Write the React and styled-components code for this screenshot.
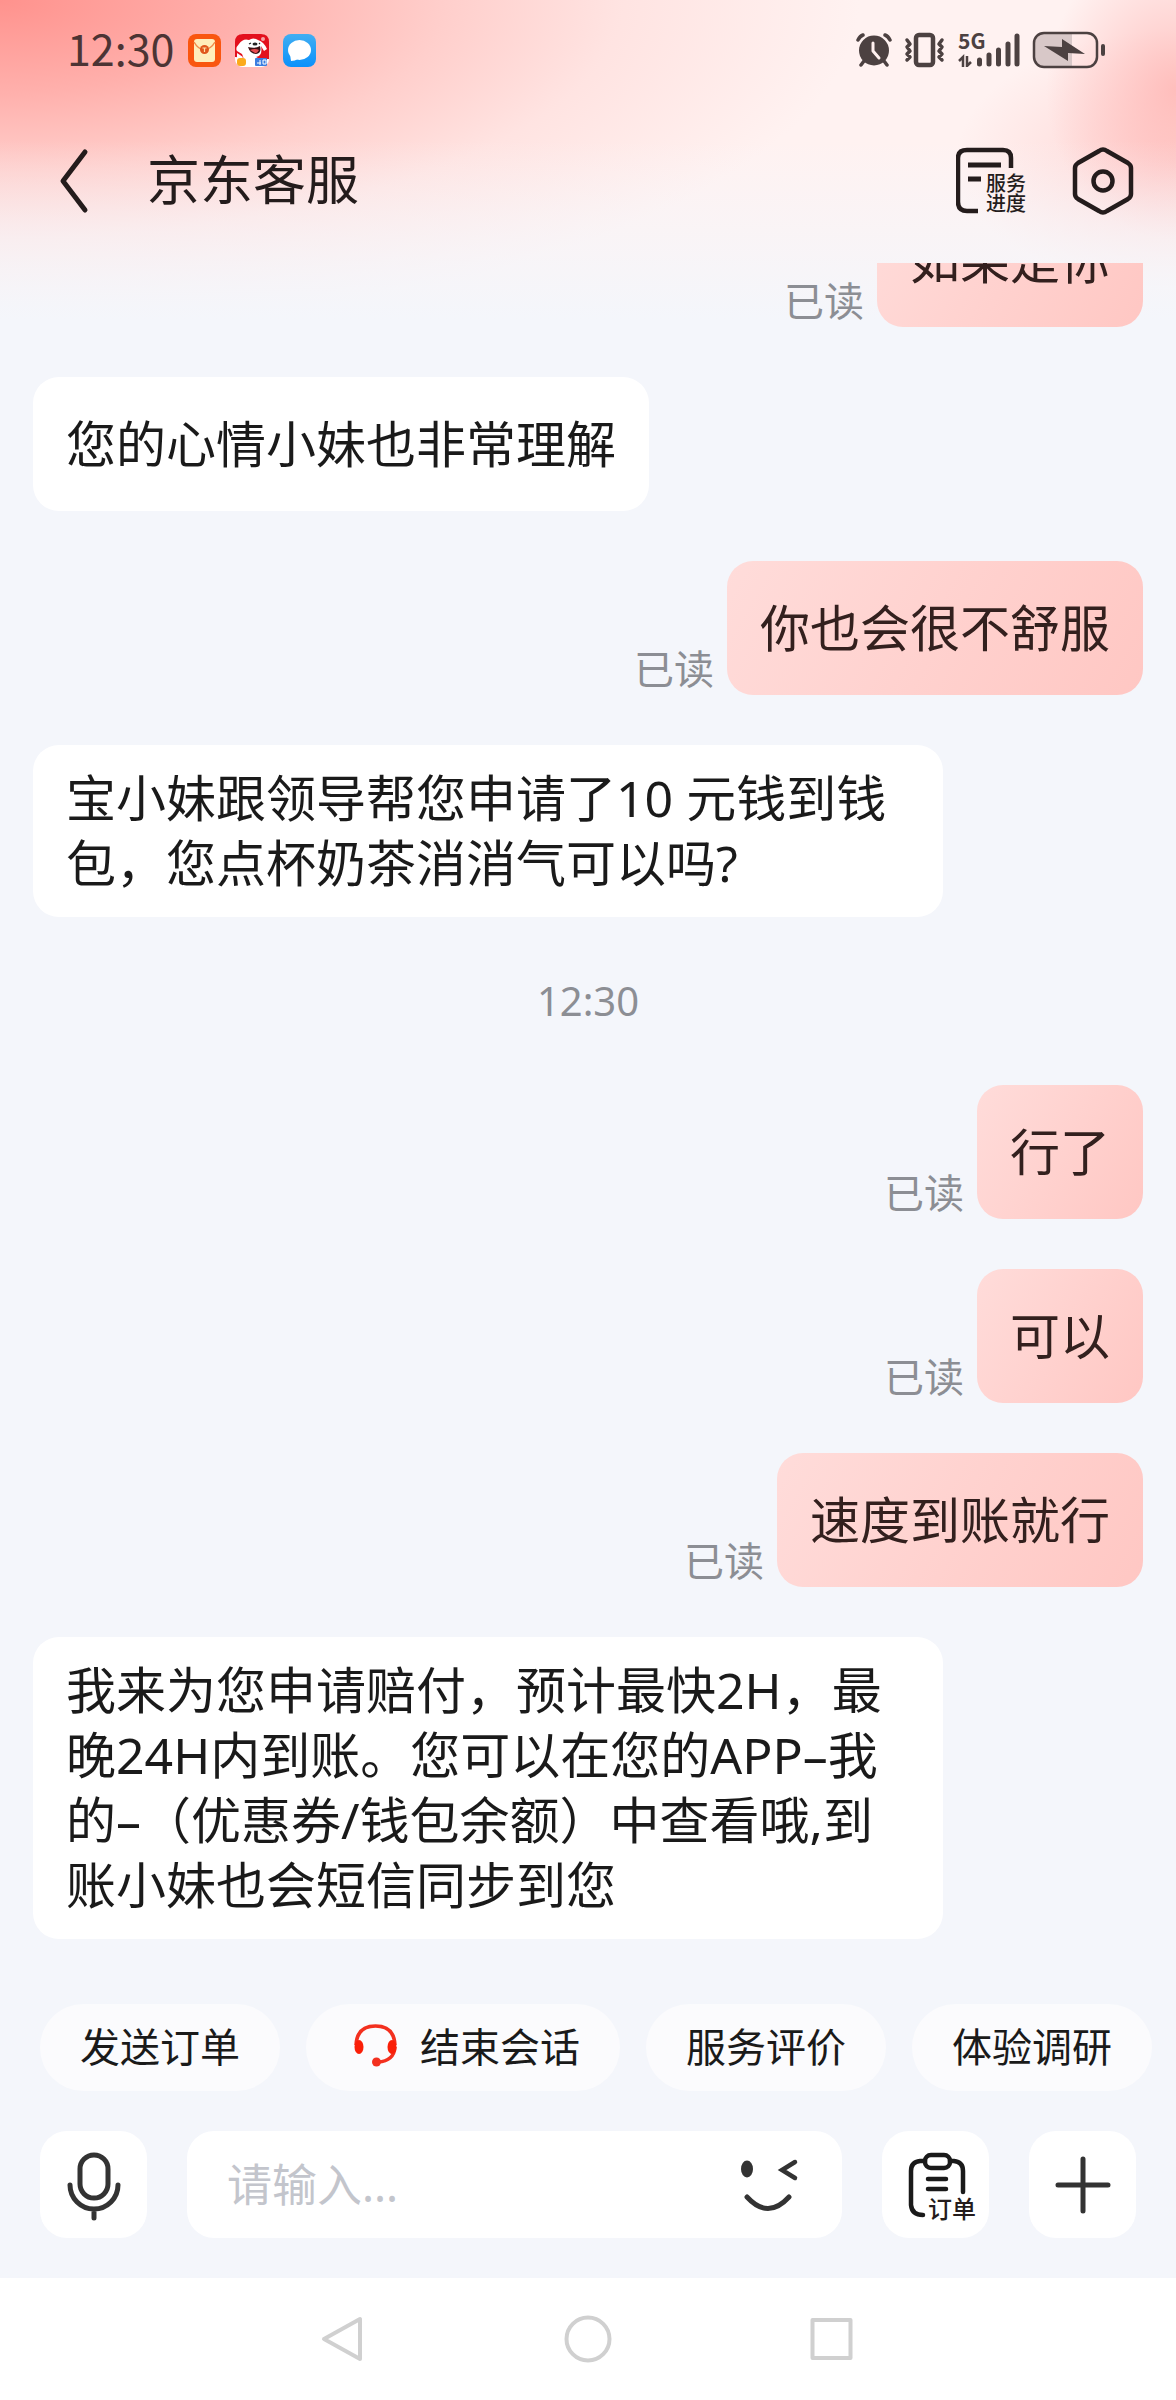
import React, { useState } from "react";
import styled, { createGlobalStyle } from "styled-components";

const MESSAGES = [
  { id: 1, from: "me", text: "如果是你" },
  { id: 2, from: "agent", text: "您的心情小妹也非常理解" },
  { id: 3, from: "me", text: "你也会很不舒服" },
  {
    id: 4,
    from: "agent",
    text: "宝小妹跟领导帮您申请了10 元钱到钱包，您点杯奶茶消消气可以吗?",
  },
  { id: 5, from: "time", text: "12:30" },
  { id: 6, from: "me", text: "行了" },
  { id: 7, from: "me", text: "可以" },
  { id: 8, from: "me", text: "速度到账就行" },
  {
    id: 9,
    from: "agent",
    text: "我来为您申请赔付，预计最快2H，最晚24H内到账。您可以在您的APP–我的–（优惠券/钱包余额）中查看哦,到账小妹也会短信同步到您",
  },
];

const QUICK_REPLIES = [
  { label: "发送订单" },
  { label: "结束会话", icon: true },
  { label: "服务评价" },
  { label: "体验调研" },
];

function App() {
  const [draft, setDraft] = useState("");

  return (
    <Page>
      <GlobalStyle />
      <StatusBar>
        <StatusGroup $gap={14}>
          <Clock>12:30</Clock>
          <WalletIcon />
          <DogIcon />
          <BubbleIcon />
        </StatusGroup>
        <StatusGroup $gap={12}>
          <AlarmIcon />
          <VibrateIcon />
          <Signal>
            <SignalIcon />
            <Network>5G</Network>
          </Signal>
          <BatteryIcon />
        </StatusGroup>
      </StatusBar>

      <Header>
        <IconButton aria-label="返回">
          <svg width="34" height="68" viewBox="0 0 34 68" fill="none">
            <path
              d="M28 5 L6 34 L28 63"
              stroke="#241c1c"
              strokeWidth="5"
              strokeLinecap="round"
              strokeLinejoin="round"
            />
          </svg>
        </IconButton>
        <Title>京东客服</Title>
        <HeaderActions>
          <IconButton>
            <ProgressIcon />
            <IconCaption $left={30} $top={28} $size={20}>
              服务
              <br />
              进度
            </IconCaption>
          </IconButton>
          <IconButton aria-label="设置">
            <SettingsIcon />
          </IconButton>
        </HeaderActions>
      </Header>

      <Chat>
        {MESSAGES.map((m) =>
          m.from === "time" ? (
            <TimeLabel key={m.id}>{m.text}</TimeLabel>
          ) : (
            <Row key={m.id} $mine={m.from === "me"}>
              {m.from === "me" && <ReadMark>已读</ReadMark>}
              <Bubble $mine={m.from === "me"}>{m.text}</Bubble>
            </Row>
          )
        )}
      </Chat>

      <QuickReplies>
        {QUICK_REPLIES.map((q) => (
          <Chip key={q.label}>
            {q.icon && <HeadsetIcon />}
            {q.label}
          </Chip>
        ))}
      </QuickReplies>

      <Composer>
        <SquareButton aria-label="语音">
          <MicIcon />
        </SquareButton>
        <InputBox>
          <TextInput
            aria-label="消息"
            placeholder="请输入..."
            value={draft}
            onChange={(e) => setDraft(e.target.value)}
          />
          <IconButton aria-label="表情">
            <WinkIcon />
          </IconButton>
        </InputBox>
        <SquareButton>
          <OrderIcon />
          <IconCaption $left={46} $top={68} $size={24}>
            订单
          </IconCaption>
        </SquareButton>
        <SquareButton aria-label="更多">
          <svg width="60" height="60" viewBox="0 0 60 60">
            <path
              d="M5 30 H55 M30 4 V56"
              stroke="#333"
              strokeWidth="5"
              strokeLinecap="round"
            />
          </svg>
        </SquareButton>
      </Composer>

      <NavBar>
        <IconButton aria-label="后退">
          <svg width="48" height="48" viewBox="0 0 48 48" fill="none">
            <path d="M40 4 V44 L4 24 Z" {...navStroke} />
          </svg>
        </IconButton>
        <IconButton aria-label="主页">
          <svg width="48" height="48" viewBox="0 0 48 48" fill="none">
            <circle cx="24" cy="24" r="21.500" {...navStroke} />
          </svg>
        </IconButton>
        <IconButton aria-label="最近任务">
          <svg width="48" height="48" viewBox="0 0 48 48" fill="none">
            <rect x="4.500" y="5" width="38" height="38" {...navStroke} />
          </svg>
        </IconButton>
      </NavBar>
    </Page>
  );
}

export default App;

const navStroke = {
  stroke: "#d0d0d0",
  strokeWidth: 4,
  strokeLinejoin: "round",
};

const WalletIcon = () => (
  <svg width="33" height="33" viewBox="0 0 33 33">
    <rect width="33" height="33" rx="8" fill="#f9560f" />
    <rect x="6" y="5" width="21" height="23" rx="3" fill="#ffeebb" />
    <path
      d="M6 8 Q10 15 16 16 Q23 15 27 8"
      fill="none"
      stroke="#f08a4a"
      strokeWidth="1.5"
    />
    <circle cx="16.500" cy="15.500" r="4.500" fill="#e0571c" />
    <path d="M14.500 14 H18.500 M16.500 14 V18" stroke="#ffe2a8" strokeWidth="1.2" />
  </svg>
);

const DogIcon = () => (
  <svg width="34" height="33" viewBox="0 0 34 33">
    <rect width="34" height="33" rx="8" fill="#fff" />
    <path d="M0 23 V8 Q0 0 8 0 H26 Q34 0 34 8 V25 H24 Z" fill="#e3101c" />
    <path
      d="M2 17 Q0 14 4 10 Q8 4 14 6 Q18 3 23 6 Q29 8 32 15 L29 17 L26 12 Q28 22 21 23 L27 26 V33 H8 L9 25 L7 20 Z"
      fill="#fff"
    />
    <path d="M2 19 L8 23 L6 25 L2 24 Z" fill="#fff" />
    <path d="M13 13 Q20 15 25 12 Q27 19 21 20 Q15 20 13 13 Z" fill="#3a1214" />
    <path d="M15 16 Q20 14 24 16 Q22 20 20 19 Z" fill="#e94b4f" />
    <ellipse cx="20" cy="10" rx="2.500" ry="1.500" fill="#222" />
    <path d="M14 10 l2 -1 M24 10 l1 -1" stroke="#222" strokeWidth="1.2" />
    <circle cx="28" cy="5" r="2" fill="#f5a4a4" />
    <rect x="2" y="24" width="9" height="8" rx="3" fill="#fbaa1c" />
    <rect x="20" y="24" width="12" height="8" rx="1" fill="#3b7ee0" />
    <path d="M22 29 h4 M25 26 v5 M28 26 h3 v4 h-3 z" fill="none" stroke="#fff" />
  </svg>
);

const BubbleIcon = () => (
  <svg width="33" height="33" viewBox="0 0 33 33">
    <defs>
      <linearGradient id="sky" x1="0" y1="0" x2="0" y2="1">
        <stop offset="0" stopColor="#41aef2" />
        <stop offset="1" stopColor="#0b91fb" />
      </linearGradient>
    </defs>
    <rect width="33" height="33" rx="8" fill="url(#sky)" />
    <ellipse cx="16.500" cy="16" rx="11.500" ry="10" fill="#fff" />
    <path d="M7 20 L8 27 Q12 27 15 25 Z" fill="#fff" />
  </svg>
);

const AlarmIcon = () => (
  <svg width="36" height="36" viewBox="0 0 36 36">
    <g stroke="#4c4141" strokeWidth="3.500" strokeLinecap="round">
      <path d="M2 8 Q4 4 7 3 M34 8 Q32 4 29 3 M8 29 L5 33 M28 29 L31 33" fill="none" />
    </g>
    <circle cx="18" cy="18.500" r="15" fill="#4c4141" />
    <path
      d="M17 11 V19 L23 26"
      fill="none"
      stroke="#fff0ef"
      strokeWidth="3"
      strokeLinecap="round"
      strokeLinejoin="round"
    />
  </svg>
);

const VibrateIcon = () => (
  <svg width="42" height="36" viewBox="0 0 42 36" fill="none" stroke="#4c4141">
    <rect x="12" y="3" width="17" height="30" rx="3" strokeWidth="4.500" />
    <path
      d="M3 8 l3 4 l-3 3 l3 4 l-3 3 l3 3 l-3 3 M38 8 l-3 4 l3 3 l-3 4 l3 3 l-3 3 l3 3"
      strokeWidth="3.500"
      strokeLinecap="round"
      strokeLinejoin="round"
    />
  </svg>
);

const SignalIcon = () => (
  <svg width="62" height="34" viewBox="0 0 62 34" stroke="#4c4141" fill="none">
    <path
      d="M21.500 27 V31 M31 22 V31 M40.500 17 V31 M50 11 V31 M59 3 V31"
      strokeWidth="5"
      strokeLinecap="round"
    />
    <path d="M1 28 L5 24 V34 M9 23 V33 L13 29" strokeWidth="2.500" />
  </svg>
);

const BatteryIcon = () => (
  <svg width="74" height="38" viewBox="0 0 74 38">
    <path d="M12 2 H40 V36 H12 Q2 36 2 26 V12 Q2 2 12 2 Z" fill="#d8c8c8" />
    <rect
      x="2"
      y="2"
      width="63"
      height="34"
      rx="10"
      fill="none"
      stroke="#4c4141"
      strokeWidth="2.500"
    />
    <rect x="69" y="13" width="4" height="12" rx="2" fill="#4c4141" />
    <path d="M12 15 L30 16 V8 L53 23 L36 22 V30 Z" fill="#4c4141" />
  </svg>
);

const ProgressIcon = () => (
  <svg width="70" height="70" viewBox="0 0 70 70" fill="none" stroke="#241c1c">
    <path d="M22 65 H11 Q2 65 2 56 V12 Q2 4 11 4 H47 Q55 4 55 12 V22" strokeWidth="4.500" />
    <path d="M12 19 H45 M12 33 H25" strokeWidth="5" />
  </svg>
);

const SettingsIcon = () => (
  <svg width="62" height="70" viewBox="0 0 62 70" fill="none" stroke="#241c1c">
    <path
      d="M27 5 Q31 2 35 5 L56 17 Q59 19 59 22 V48 Q59 51 56 53 L35 65 Q31 68 27 65 L6 53 Q3 51 3 48 V22 Q3 19 6 17 Z"
      strokeWidth="4.500"
    />
    <circle cx="31" cy="35" r="9.500" strokeWidth="4.500" />
  </svg>
);

const HeadsetIcon = () => (
  <svg width="52" height="44" viewBox="0 0 52 44" fill="none">
    <path
      d="M10 22 Q11 3 29.500 3 Q48 3 49 22 M49 24 Q48 38 32 39"
      stroke="#f3301f"
      strokeWidth="3.500"
    />
    <ellipse cx="13" cy="24" rx="4.500" ry="7" fill="#fa1f08" />
    <ellipse cx="46" cy="24" rx="4.500" ry="7" fill="#fa1f08" />
    <circle cx="30.500" cy="39" r="4.500" fill="#f3301f" />
  </svg>
);

const MicIcon = () => (
  <svg width="60" height="72" viewBox="0 0 60 72" fill="none" stroke="#333">
    <rect x="16" y="6" width="28" height="43" rx="14" strokeWidth="5" />
    <path
      d="M6 36 A24 24 0 0 0 54 36 M30 60 V69"
      strokeWidth="5"
      strokeLinecap="round"
    />
  </svg>
);

const WinkIcon = () => (
  <svg width="60" height="56" viewBox="0 0 60 56" fill="none" stroke="#333">
    <ellipse cx="7" cy="12" rx="6" ry="8.500" fill="#333" stroke="none" />
    <path d="M55 5 L42 13 L55 21" strokeWidth="4.500" strokeLinecap="round" />
    <path d="M7 40 Q28 63 49 40" strokeWidth="5" strokeLinecap="round" />
  </svg>
);

const OrderIcon = () => (
  <svg width="60" height="68" viewBox="0 0 60 68" fill="none" stroke="#1a1a1a">
    <path
      d="M19 10 H14 Q5 11 5 20 V54 Q6 64 17 64 M44 10 H48 Q57 11 57 20 V41"
      strokeWidth="4.500"
      strokeLinecap="round"
    />
    <rect x="19" y="4" width="25" height="13" rx="6" strokeWidth="4.500" />
    <path d="M22 28 H40 M22 38 H40" strokeWidth="4.500" strokeLinecap="round" />
  </svg>
);

const GlobalStyle = createGlobalStyle`
  * {
    box-sizing: border-box;
  }
  body {
    margin: 0;
  }
  button,
  input {
    font-family: inherit;
    border: 0;
    padding: 0;
    background: none;
  }
  svg {
    display: block;
    flex-shrink: 0;
  }
`;

const Page = styled.div`
  display: flex;
  flex-direction: column;
  height: 100vh;
  font-family: "Noto Sans", "Noto Sans CJK SC", sans-serif;
  color: #1a1a1a;
  background:
    linear-gradient(rgba(244, 246, 251, 0) 140px, #f4f6fb 320px),
    radial-gradient(
      ellipse 130px 150px at 100% 90px,
      rgba(255, 180, 178, 0.8),
      rgba(255, 190, 188, 0)
    ),
    radial-gradient(
      ellipse 220px 130px at 100% 160px,
      rgba(255, 190, 188, 0.6),
      rgba(255, 200, 198, 0)
    ),
    radial-gradient(
      ellipse 860px 330px at 0 0,
      #ff928d,
      #ffb0ac 28%,
      #ffcfcc 52%,
      rgba(255, 226, 224, 0.9) 72%,
      rgba(255, 240, 239, 0)
    ),
    #fff2f1;
`;

const StatusBar = styled.div`
  display: flex;
  flex-shrink: 0;
  align-items: center;
  justify-content: space-between;
  height: 100px;
  padding: 0 70px 0 67px;
  color: #4c3434;
`;

const StatusGroup = styled.div`
  display: flex;
  align-items: center;
  gap: ${(p) => p.$gap}px;
`;

const Clock = styled.span`
  padding-bottom: 6px;
  font-family: "Noto Sans CJK SC", sans-serif;
  font-size: 43px;
  line-height: 50px;
`;

const Signal = styled.div`
  position: relative;
`;

const Network = styled.span`
  position: absolute;
  left: 0;
  top: -5px;
  font-family: "Noto Sans CJK SC", sans-serif;
  font-size: 21px;
  font-weight: 700;
  line-height: 24px;
  color: #4c4141;
`;

const Header = styled.header`
  display: flex;
  flex-shrink: 0;
  align-items: center;
  gap: 56px;
  height: 163px;
  padding: 0 42px 2px 57px;
`;

const Title = styled.h1`
  margin: 0;
  padding-bottom: 2px;
  font-size: 53px;
  font-weight: 400;
  line-height: 64px;
  color: #241c1c;
`;

const HeaderActions = styled.div`
  display: flex;
  gap: 46px;
  margin-left: auto;
`;

const IconButton = styled.button`
  position: relative;
  cursor: pointer;
`;

/* small caption that sits on the corner of an icon */
const IconCaption = styled.span`
  position: absolute;
  left: ${(p) => p.$left}px;
  top: ${(p) => p.$top}px;
  font-size: ${(p) => p.$size}px;
  font-weight: 500;
  line-height: 20px;
  white-space: nowrap;
  color: #241c1c;
`;

const Chat = styled.main`
  display: flex;
  flex: 1;
  flex-direction: column;
  justify-content: flex-end;
  gap: 50px;
  min-height: 0;
  padding: 0 33px;
  overflow: hidden;
`;

const Row = styled.div`
  display: flex;
  flex-shrink: 0;
  align-items: flex-end;
  justify-content: ${(p) => (p.$mine ? "flex-end" : "flex-start")};
  gap: 13px;
`;

const Bubble = styled.div`
  display: flex;
  align-items: center;
  min-height: 134px;
  max-width: 82%;
  padding: 21px 33px;
  border-radius: 26px;
  font-size: 50px;
  line-height: 65px;
  color: ${(p) => (p.$mine ? "#33201e" : "#1a1a1a")};
  background: ${(p) =>
    p.$mine ? "linear-gradient(120deg, #ffdcda, #ffc7c3)" : "#fff"};
`;

const ReadMark = styled.span`
  padding-bottom: 1px;
  font-size: 40px;
  line-height: 50px;
  color: #8c8e94;
`;

const TimeLabel = styled.time`
  flex-shrink: 0;
  font-size: 40px;
  line-height: 68px;
  text-align: center;
  color: #8c8e94;
`;

const QuickReplies = styled.div`
  display: flex;
  flex-shrink: 0;
  gap: 26px;
  padding: 65px 0 0 40px;
  overflow: hidden;
`;

const Chip = styled.button`
  display: flex;
  flex-shrink: 0;
  align-items: center;
  gap: 22px;
  height: 87px;
  padding: 0 40px 5px;
  border-radius: 44px;
  font-size: 40px;
  color: #1a1a1a;
  background: #fbfbfd;
  cursor: pointer;
`;

const Composer = styled.div`
  display: flex;
  flex-shrink: 0;
  gap: 40px;
  padding: 40px;
`;

const SquareButton = styled.button`
  position: relative;
  display: flex;
  flex-shrink: 0;
  align-items: center;
  justify-content: center;
  width: 107px;
  height: 107px;
  border-radius: 27px;
  background: #fff;
  cursor: pointer;
`;

const InputBox = styled.div`
  display: flex;
  flex: 1;
  align-items: center;
  min-width: 0;
  height: 107px;
  padding: 0 42px 0 40px;
  border-radius: 27px;
  background: #fff;
`;

const TextInput = styled.input`
  flex: 1;
  min-width: 0;
  font-size: 45px;
  color: #1a1a1a;
  outline: none;

  &::placeholder {
    color: #c3c5cc;
    opacity: 1;
  }
`;

const NavBar = styled.nav`
  display: flex;
  flex-shrink: 0;
  align-items: center;
  justify-content: center;
  gap: 196px;
  height: 122px;
  background: #fff;
`;
